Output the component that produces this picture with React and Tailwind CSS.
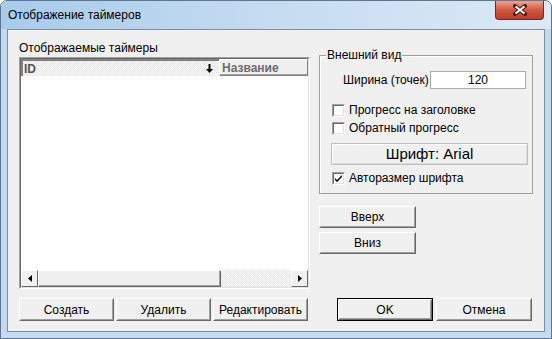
import React from "react";

const font = { fontFamily: '"Liberation Sans", Arial, sans-serif' };

const Btn = ({ children, className = "", isDefault = false }) => (
  <div className={`${isDefault ? "border border-black" : ""} ${className}`}>
    <div className="h-full w-full border border-t-white border-l-white border-r-[#696969] border-b-[#696969] bg-[#f0f0f0]">
      <div className="h-full w-full flex items-center justify-center border border-t-[#f0f0f0] border-l-[#f0f0f0] border-r-[#a0a0a0] border-b-[#a0a0a0] text-[12px] text-black">
        {children}
      </div>
    </div>
  </div>
);

const Check = ({ checked, label }) => (
  <div className="flex items-center h-[16px] gap-[4px]">
    <div className="w-[13px] h-[13px] border border-t-[#a0a0a0] border-l-[#a0a0a0] border-r-white border-b-white">
      <div className="w-full h-full border border-t-[#696969] border-l-[#696969] border-r-[#e3e3e3] border-b-[#e3e3e3] bg-white flex items-center justify-center">
        {checked && (
          <svg width="7" height="7" viewBox="0 0 7 7">
            <path d="M0 3 L2 5 L7 0 L7 2 L2 7 L0 5 Z" fill="#000" />
          </svg>
        )}
      </div>
    </div>
    <span className="text-[12px] text-black">{label}</span>
  </div>
);

const hatch =
  "bg-[repeating-conic-gradient(#ffffff_0%_25%,#e4e4e4_0%_50%)] bg-[length:2px_2px]";

export default function App() {
  return (
    <div
      style={font}
      className="w-[552px] h-[339px] flex flex-col bg-[#c4daf0] border border-[#5f7590] rounded-t-[7px] overflow-hidden"
    >
      {/* title bar */}
      <div className="h-[28px] flex items-start bg-linear-to-r from-[#a8cbea] via-[#c6dcf1] to-[#dce9f6]">
        <span className="pl-[7px] pt-[7px] text-[12px] text-black leading-[15px]">
          Отображение таймеров
        </span>
        <div className="ml-auto mr-[7px] w-[49px] h-[19px] rounded-b-[4px] border border-t-0 border-[#6d2a22] bg-linear-to-b from-[#e8a494] via-[#d0583f] to-[#c0392a] flex items-center justify-center">
          <svg width="14" height="12" viewBox="0 0 14 12">
            <path d="M2 2 L12 10 M12 2 L2 10" stroke="#4a1d17" strokeWidth="4" strokeLinecap="square" />
            <path d="M2.5 2.5 L11.5 9.5 M11.5 2.5 L2.5 9.5" stroke="#ffffff" strokeWidth="2" />
          </svg>
        </div>
      </div>

      {/* client area */}
      <div className="flex-1 mx-[6px] mb-[6px] border border-[#7d8ea3] bg-[#f0f0f0] flex pl-[11px] pt-[11px] gap-[9px]">
        {/* left column */}
        <div className="w-[291px] flex flex-col">
          <div className="h-[16px] text-[12px] leading-[14px] text-black">Отображаемые таймеры</div>
          <div className="h-[232px] border border-t-[#a0a0a0] border-l-[#a0a0a0] border-r-white border-b-white">
            <div className="h-full flex flex-col border border-t-[#696969] border-l-[#696969] border-r-[#e3e3e3] border-b-[#e3e3e3] bg-white">
              <div className="h-[17px] flex">
                <div className={`w-[198px] flex items-center border-t-2 border-l-2 border-t-[#808080] border-l-[#808080] ${hatch}`}>
                  <span className="pl-[1px] text-[12px] font-bold text-[#555]">ID</span>
                  <svg className="ml-auto mr-[6px]" width="7" height="9" viewBox="0 0 7 9">
                    <path d="M2.5 0 H4.5 V5 H7 L3.5 9 L0 5 H2.5 Z" fill="#000" />
                  </svg>
                </div>
                <div className="w-[89px] flex items-center border border-t-white border-l-white border-r-[#808080] border-b-[#808080] bg-[#f0f0f0] shadow-[inset_0_-1px_0_#a0a0a0]">
                  <span className="pl-[2px] text-[12px] font-bold text-[#6b6b6b]">Название</span>
                </div>
              </div>
              <div className="flex-1" />
              <div className="h-[17px] flex">
                <div className="w-[17px] h-full border border-t-white border-l-white border-r-[#696969] border-b-[#696969] bg-[#f0f0f0] flex items-center justify-center">
                  <svg width="4" height="7" viewBox="0 0 4 7"><path d="M4 0 V7 L0 3.5 Z" fill="#000" /></svg>
                </div>
                <div className="w-[183px] h-full border border-t-white border-l-white border-r-[#696969] border-b-[#696969] bg-[#f0f0f0] shadow-[inset_-1px_-1px_0_#a0a0a0]" />
                <div className={`flex-1 h-full ${hatch}`} />
                <div className="w-[17px] h-full border border-t-white border-l-white border-r-[#696969] border-b-[#696969] bg-[#f0f0f0] flex items-center justify-center">
                  <svg width="4" height="7" viewBox="0 0 4 7"><path d="M0 0 V7 L4 3.5 Z" fill="#000" /></svg>
                </div>
              </div>
            </div>
          </div>
          <div className="mt-[9px] flex gap-[2px]">
            <Btn className="w-[95px] h-[23px]">Создать</Btn>
            <Btn className="w-[95px] h-[23px]">Удалить</Btn>
            <Btn className="w-[95px] h-[23px]">Редактировать</Btn>
          </div>
        </div>

        {/* right column */}
        <div className="w-[214px] flex flex-col pb-[10px]">
          <fieldset className="mt-[7px] border border-[#a0a0a0] shadow-[inset_1px_1px_0_#fff] pb-[7px]">
            <legend className="ml-[6px] px-[1px] text-[12px] leading-[15px] text-black">Внешний вид</legend>
            <div className="mt-[8px] flex items-center pl-[23px] pr-[6px]">
              <span className="text-[12px] text-black">Ширина (точек)</span>
              <div className="ml-auto w-[96px] h-[18px] border border-[#abadb3] bg-white flex items-center justify-center text-[12px] text-black">
                120
              </div>
            </div>
            <div className="mt-[13px] pl-[12px] flex flex-col gap-[2px]">
              <Check label="Прогресс на заголовке" />
              <Check label="Обратный прогресс" />
            </div>
            <div className="mt-[7px] ml-[11px] mr-[4px] h-[22px] border border-[#c0c0c0] bg-[#f0f0f0] shadow-[inset_1px_1px_0_#fff,inset_-1px_-1px_0_#dcdcdc] flex items-center justify-center text-[15px] text-black">
              Шрифт: Arial
            </div>
            <div className="mt-[5px] pl-[12px]">
              <Check checked label="Авторазмер шрифта" />
            </div>
          </fieldset>
          <Btn className="mt-[12px] w-[97px] h-[22px]">Вверх</Btn>
          <Btn className="mt-[4px] w-[97px] h-[22px]">Вниз</Btn>
          <div className="mt-auto flex justify-end gap-[3px] pr-[1px]">
            <Btn isDefault className="w-[96px] h-[23px]">OK</Btn>
            <Btn className="w-[96px] h-[23px]">Отмена</Btn>
          </div>
        </div>
      </div>
    </div>
  );
}
